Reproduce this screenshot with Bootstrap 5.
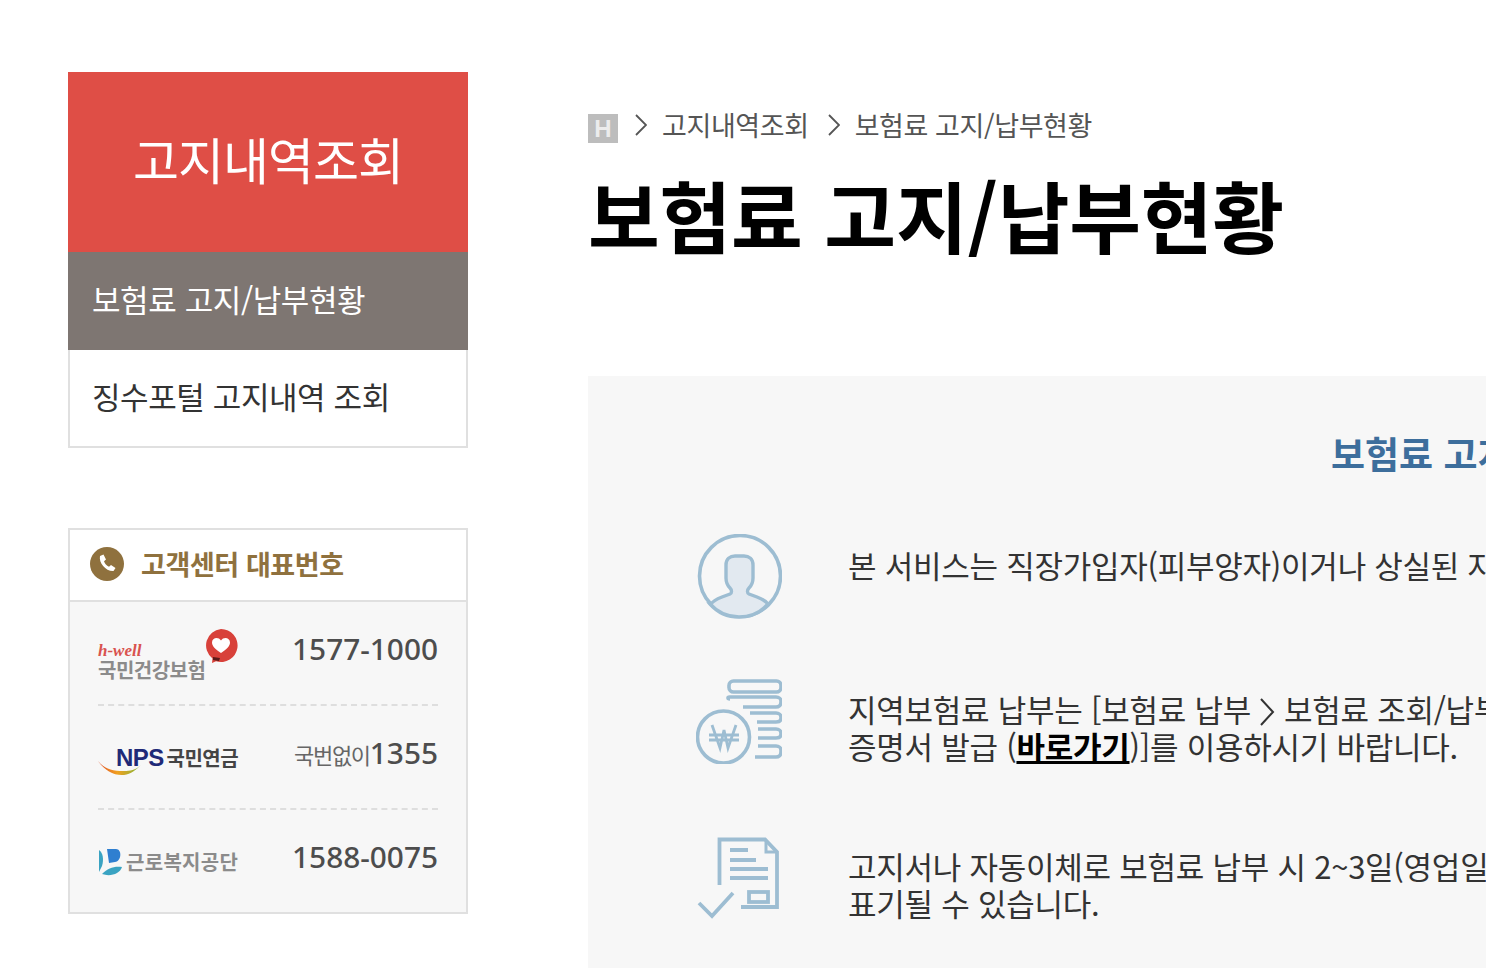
<!DOCTYPE html>
<html lang="ko">
<head>
    <meta charset="UTF-8">
    <meta name="viewport" content="width=device-width, initial-scale=1.0">
    <title>보험료 고지/납부현황</title>
    <link href="https://cdn.jsdelivr.net/npm/bootstrap@5.3.0/dist/css/bootstrap.min.css" rel="stylesheet">
    <style>
        html, body { height: 968px; overflow: hidden; }
        body { font-family: "Noto Sans CJK KR", "Noto Sans", sans-serif; color: #333; background: #fff; }
        .page-wrap { padding: 72px 0 0 68px; gap: 120px; width: 1486px; height: 968px; }

        .side-col { width: 400px; flex: none; }
        .side-title { height: 180px; padding-bottom: 7px; background: #df4e46; color: #fff; font-size: 50px; letter-spacing: -1px; }
        .side-menu .list-group-item { height: 98px; padding: 0 0 4px 22px; font-size: 31px; letter-spacing: -.4px; border-radius: 0; display: flex; align-items: center; color: #333; border: 2px solid #e0e0e0; border-top: 0; }
        .side-menu .list-group-item.active { padding-left: 24px; background: #7e7672; color: #fff; border: 0; }

        .call-box { margin-top: 80px; border: 2px solid #e0e0e0; height: 386px; background: #f7f7f7; }
        .call-head { height: 72px; padding: 0 0 2px 20px; background: #fff; border-bottom: 2px solid #e0e0e0; gap: 17px; color: #8f713e; font-size: 27px; font-weight: 700; letter-spacing: -.4px; }
        .call-body { padding: 0 28px; }
        .call-row { height: 104px; border-bottom: 2px dashed #dedede; }
        .call-row:last-child { border-bottom: 0; }
        .call-num { margin-bottom: 8px; font-size: 29.8px; font-weight: 500; color: #4d4d4d; font-family: "Noto Sans", sans-serif; line-height: 1; }
        .call-row:last-child .call-num { margin-bottom: 11px; }
        .call-num small { font-size: 22px; font-weight: 400; font-family: "Noto Sans CJK KR", sans-serif; color: #666; letter-spacing: -1.300px; }
        .logo-box { width: 142px; height: 60px; }
        .logo-name { font-size: 20px; font-weight: 700; line-height: 1; color: #8b8b8b; letter-spacing: -.5px; white-space: nowrap; }
        .heart-logo { padding-bottom: 3px; }
        .heart-mark { top: 6px; right: 2px; }
        .hwell { margin-bottom: 1px; font-family: "Liberation Serif", serif; font-style: italic; font-weight: 700; font-size: 17px; line-height: 1; color: #d9534f; }
        .nps-swoosh { left: 0; top: 33px; }
        .nps-text { left: 18px; top: 19px; gap: 3px; }
        .nps-mark { font: 700 24px/1 "Liberation Sans", sans-serif; letter-spacing: -.6px; color: #1f2a78; }
        .nps-name { color: #444; }
        .comwel-name { letter-spacing: .3px; }

        .main-col { flex: 1; min-width: 0; }
        .crumbs { margin-top: 33px; height: 40px; font-size: 27px; color: #555; letter-spacing: -.4px; white-space: nowrap; gap: 15px; }
        .crumb-first { margin-left: 2px; }
        .crumb-next { margin-left: 4px; }
        .home-mark { width: 30px; height: 29px; margin-top: 6px; background: #bdbdbd; color: #ececec; font: 700 24px/29px "Liberation Sans", sans-serif; letter-spacing: 0; }
        .page-head { margin: 24px 0 0; font-size: 78px; font-weight: 700; line-height: 90px; color: #000; letter-spacing: -.2px; white-space: nowrap; }
        .info-panel { margin-top: 117px; background: #f7f7f7; height: 620px; overflow: hidden; padding-left: 108px; }
        .info-title { margin: 0 0 0 635px; padding-top: 52px; font-size: 37px; line-height: 50px; font-weight: 700; color: #3d6e9c; white-space: nowrap; }
        .info-row { gap: 66px; white-space: nowrap; font-size: 31px; line-height: 37px; color: #333; letter-spacing: -.25px; }
        .info-row > svg { flex: none; width: 86px; }
        .info-row a { color: #000; font-weight: 700; }
        .path-arrow { vertical-align: -4px; }
        .row-first { margin-top: 56px; }
        .row-first span { margin-bottom: 26px; }
        .row-second { margin-top: 58px; }
        .row-third { margin-top: 71px; }
        .row-second span, .row-third span { margin-top: 12px; }
    </style>
</head>
<body>
    <div class="d-flex page-wrap">
        <div class="side-col">
            <div class="side-title d-flex align-items-center justify-content-center">고지내역조회</div>
            <div class="list-group side-menu rounded-0">
                <a href="#" class="list-group-item active">보험료 고지/납부현황</a>
                <a href="#" class="list-group-item">징수포털 고지내역 조회</a>
            </div>

            <div class="call-box">
                <div class="call-head d-flex align-items-center">
                    <svg width="34" height="34" viewBox="0 0 34 34"><circle cx="17" cy="17" r="17" fill="#8f713e"/><path d="M10 9l3.500-1.500 2.500 5-2 1.800c.8 2.500 2.500 4.300 5 5.400l2-1.700 4.500 3-2 3c-7.500.5-15-8-13.500-15z" fill="#fff"/></svg>
                    <span>고객센터 대표번호</span>
                </div>
                <div class="call-body">
                    <div class="call-row d-flex align-items-center justify-content-between">
                        <div class="logo-box heart-logo position-relative d-flex flex-column justify-content-end">
                            <div class="hwell">h-well</div>
                            <div class="logo-name">국민건강보험</div>
                            <svg class="heart-mark position-absolute" width="34" height="34" viewBox="0 0 34 34"><path d="M17 0a16.500 16.500 0 1 1-5 32.200l-4 1.800 .5-4.500A16.500 16.500 0 0 1 17 0z" fill="#d8413a"/><path d="M17 24c-5-3.500-9-6.500-9-10.500 0-5 6.500-6 9-2 2.500-4 9-3 9 2 0 4-4 7-9 10.500z" fill="#fff"/><path d="M9 28l7 1-1 3-6-1z" fill="#5a1a18"/></svg>
                        </div>
                        <div class="call-num">1577-1000</div>
                    </div>
                    <div class="call-row d-flex align-items-center justify-content-between">
                        <div class="logo-box position-relative">
                            <svg class="nps-swoosh position-absolute" width="44" height="18" viewBox="0 0 44 18">
                                <defs><linearGradient id="swoosh"><stop offset="0" stop-color="#e2502a"/><stop offset=".45" stop-color="#f0a020"/><stop offset="1" stop-color="#7fb83a"/></linearGradient></defs>
                                <path d="M0 1C6 10 16 16 26 15 33 14 38 10 43 5 36 12 28 11 22 11 12 11 5 7 0 1z" fill="url(#swoosh)"/>
                            </svg>
                            <div class="nps-text position-absolute d-flex align-items-center">
                                <span class="nps-mark">NPS</span><span class="logo-name nps-name">국민연금</span>
                            </div>
                        </div>
                        <div class="call-num"><small>국번없이</small>1355</div>
                    </div>
                    <div class="call-row d-flex align-items-center justify-content-between">
                        <div class="logo-box d-flex align-items-center gap-1">
                            <svg width="24" height="28" viewBox="0 0 24 28"><path d="M1 2c4 3 5 9 3 16l-3 6z" fill="#3aa3c2"/><path d="M9 1h9c6 0 6 12-1 13l-6 1z" fill="#2f7fd0"/><path d="M4 26c6-6 12-8 20-7-2 7-12 10-20 7z" fill="#3aa3c2"/></svg>
                            <span class="logo-name comwel-name">근로복지공단</span>
                        </div>
                        <div class="call-num">1588-0075</div>
                    </div>
                </div>
            </div>
        </div>

        <div class="main-col">
            <div class="crumbs d-flex align-items-center">
                <span class="home-mark text-center">H</span>
                <svg class="crumb-first" width="12" height="22" viewBox="0 0 12 22"><path d="M1 1l10 10L1 21" fill="none" stroke="#555" stroke-width="1.800"/></svg>
                <span>고지내역조회</span>
                <svg class="crumb-next" width="12" height="22" viewBox="0 0 12 22"><path d="M1 1l10 10L1 21" fill="none" stroke="#555" stroke-width="1.800"/></svg>
                <span>보험료 고지/납부현황</span>
            </div>
            <h1 class="page-head">보험료 고지/납부현황</h1>

            <div class="info-panel">
                <h2 class="info-title">보험료 고지</h2>
                <div class="info-row row-first d-flex align-items-center">
                    <svg height="86" viewBox="0 0 86 86"><circle cx="44" cy="42" r="40.500" fill="none" stroke="#9dbdd2" stroke-width="3.600"/><path transform="translate(3 0)" d="M12 70c2-3 6-5 11-7l8-3c2-1 2-4 0-6-3-3-4-6-4-10V31c0-6 4-9 9-9h9c5 0 9 3 9 9v13c0 4-1 7-4 10-2 2-2 5 0 6l8 3c5 2 9 4 11 7-8 9-18 13-29 13s-21-4-29-13z" fill="#e2e9f0" stroke="#9dbdd2" stroke-width="3.400"/></svg>
                    <span>본 서비스는 직장가입자(피부양자)이거나 상실된 자</span>
                </div>
                <div class="info-row row-second d-flex align-items-center">
                    <svg height="86" viewBox="0 0 86 86"><g fill="none" stroke="#9dbdd2" stroke-width="3.600"><circle cx="27.500" cy="59" r="26"/><path d="M16 47l8 23 4-18 4 18 8-23M13 57h30M13 62h30" stroke-width="2.800"/><rect x="33" y="3" width="52" height="11" rx="4.500"/><path d="M34 21c-1 0-2 0-2-1 0-.5.5-1 1.500-1H80c3 0 5 2 5 4v1c0 3-2 5-5 5H47M54 35h26c3 0 5 2 5 4v1c0 3-2 4-5 4H61M62 51h18c3 0 5 2 5 4v1c0 3-2 4-5 4H62M62 68h18c3 0 5 2 5 4v2c0 3-2 5-5 5H59"/></g></svg>
                    <span>지역보험료 납부는 [보험료 납부 <svg class="path-arrow" width="16" height="28" viewBox="0 0 16 28"><path d="M2 1l12 13L2 27" fill="none" stroke="#333" stroke-width="2"/></svg> 보험료 조회/납부<br>증명서 발급 (<a href="#">바로가기</a>)]를 이용하시기 바랍니다.</span>
                </div>
                <div class="info-row row-third d-flex align-items-center">
                    <svg height="86" viewBox="0 0 86 86"><g fill="none" stroke="#9dbdd2" stroke-width="3.800"><path d="M23.500 50V4.500H69L81 17V72H45"/><path d="M70 6v11h11" stroke-width="3"/><path d="M34 15h18M34 25h26M34 34h38M34 43h38M3 68l13 13 21-23"/><rect x="53" y="57" width="19" height="10"/></g></svg>
                    <span>고지서나 자동이체로 보험료 납부 시 2~3일(영업일<br>표기될 수 있습니다.</span>
                </div>
            </div>
        </div>
    </div>
</body>
</html>
